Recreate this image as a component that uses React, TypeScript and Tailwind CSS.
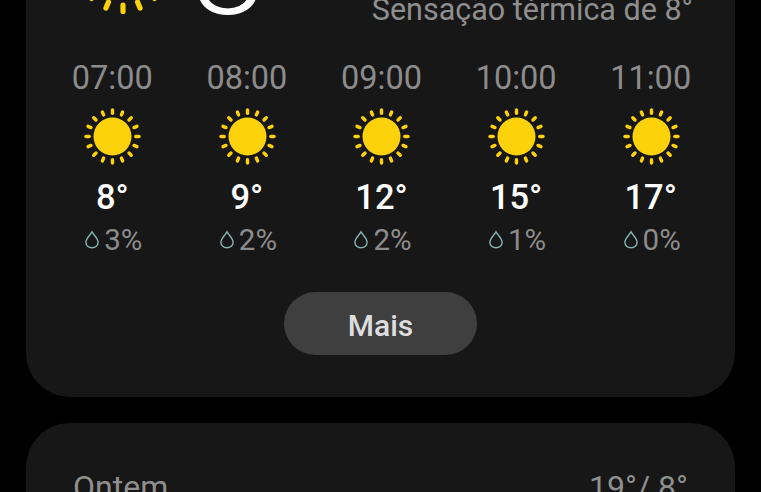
const hours = [
  { time: "07:00", temp: "8°", rain: "3%" },
  { time: "08:00", temp: "9°", rain: "2%" },
  { time: "09:00", temp: "12°", rain: "2%" },
  { time: "10:00", temp: "15°", rain: "1%" },
  { time: "11:00", temp: "17°", rain: "0%" },
];

const rayAngles = Array.from({ length: 16 }, (_, i) => i * 22.5);

function Sun({ className, cx, cy, r, inner, outer, sw, viewBox }: { className: string; cx: number; cy: number; r: number; inner: number; outer: number; sw: number; viewBox: string }) {
  return (
    <svg className={className} viewBox={viewBox} fill="none">
      <circle cx={cx} cy={cy} r={r} fill="#fdd20a" />
      {rayAngles.map((a) => {
        const t = (a * Math.PI) / 180;
        return (
          <line
            key={a}
            x1={cx + Math.sin(t) * inner}
            y1={cy - Math.cos(t) * inner}
            x2={cx + Math.sin(t) * outer}
            y2={cy - Math.cos(t) * outer}
            stroke="#fdd20a"
            strokeWidth={sw}
            strokeLinecap="round"
          />
        );
      })}
    </svg>
  );
}

function Drop() {
  return (
    <svg className="w-[14px] h-[20px] shrink-0" viewBox="0 0 14 20" fill="none">
      <path d="M7 1.8 C5.6 4.8 0.9 8.2 0.9 12.3 C0.9 15.6 3.7 17.8 7 17.8 C10.3 17.8 13.1 15.6 13.1 12.3 C13.1 8.2 8.4 4.8 7 1.8 Z" stroke="#86b5b1" strokeWidth="1.4" />
    </svg>
  );
}

export default function App() {
  return (
    <div className="h-[492px] w-[761px] overflow-hidden bg-black font-['Roboto',sans-serif] antialiased">
      <div className="-mt-[70px] mx-[26px] w-[709px] h-[467px] rounded-[44px] bg-[#171717]">
        <div className="flex h-[100px] items-end">
          <Sun className="ml-[37px] w-[120px] h-[100px] shrink-0" viewBox="0 0 120 100" cx={60} cy={37} r={30} inner={38} outer={44.5} sw={5.2} />
          <div className="ml-[15px] flex-1 h-[100px] flex items-end justify-between pr-[42px]">
            <span className="text-[132px] leading-[100px] font-light text-white mb-[11px] -ml-[7px]">8</span>
            <span className="text-[30.5px] leading-[36px] mb-[2px] text-[#8f8f8f]">Sensação térmica de 8°</span>
          </div>
        </div>
        <div className="mt-[27px] ml-[19px] w-[673px] grid grid-cols-5">
          {hours.map((h) => (
            <div key={h.time} className="flex flex-col items-center">
              <div className="text-[32.5px] leading-[42px] text-[#8c8c8c]">{h.time}</div>
              <Sun className="mt-[7px] w-[60px] h-[60px]" viewBox="0 0 60 60" cx={30.5} cy={30.5} r={19} inner={23.3} outer={26.5} sw={3.4} />
              <div className="mt-[9px] text-[34.5px] leading-[44px] font-medium text-white">{h.temp}</div>
              <div className="mt-[3px] ml-[3px] flex items-center gap-[5px]">
                <Drop />
                <span className="text-[29.5px] leading-[36px] text-[#8c8c8c]">{h.rain}</span>
              </div>
            </div>
          ))}
        </div>
        <div className="mt-[34px] flex justify-center">
          <div className="w-[193px] h-[63px] pt-[3px] rounded-full bg-[#3f3f3f] flex items-center justify-center text-[30px] font-medium text-[#dedede]">Mais</div>
        </div>
      </div>
      <div className="mt-[26px] mx-[26px] w-[709px] h-[200px] rounded-[44px] bg-[#171717] px-[47px] pt-[44px] flex justify-between text-[32px] leading-[40px] text-[#8f8f8f]">
        <span>Ontem</span>
        <span>19°/ 8°</span>
      </div>
    </div>
  );
}
